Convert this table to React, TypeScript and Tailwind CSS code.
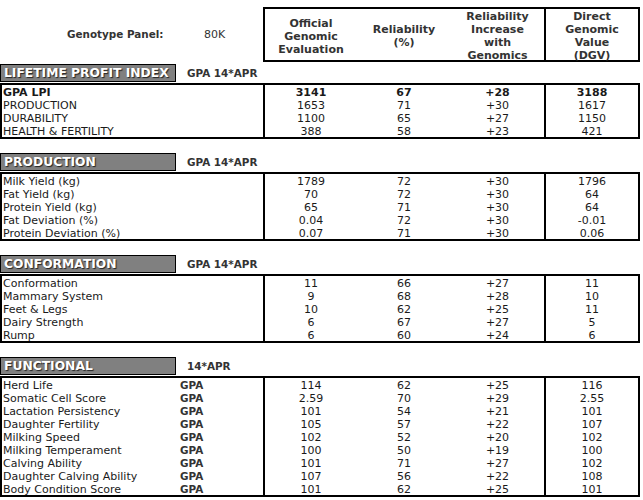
import React from 'react';

type Row = {
  label: string;
  gpa?: boolean;
  bold?: boolean;
  official: string;
  rel: string;
  inc: string;
  dgv: string;
};

type Section = {
  title: string;
  run: string;
  rows: Row[];
};

const sections: Section[] = [
  {
    title: 'LIFETIME PROFIT INDEX',
    run: 'GPA 14*APR',
    rows: [
      { label: 'GPA LPI', bold: true, official: '3141', rel: '67', inc: '+28', dgv: '3188' },
      { label: 'PRODUCTION', official: '1653', rel: '71', inc: '+30', dgv: '1617' },
      { label: 'DURABILITY', official: '1100', rel: '65', inc: '+27', dgv: '1150' },
      { label: 'HEALTH & FERTILITY', official: '388', rel: '58', inc: '+23', dgv: '421' },
    ],
  },
  {
    title: 'PRODUCTION',
    run: 'GPA 14*APR',
    rows: [
      { label: 'Milk Yield (kg)', official: '1789', rel: '72', inc: '+30', dgv: '1796' },
      { label: 'Fat Yield (kg)', official: '70', rel: '72', inc: '+30', dgv: '64' },
      { label: 'Protein Yield (kg)', official: '65', rel: '71', inc: '+30', dgv: '64' },
      { label: 'Fat Deviation (%)', official: '0.04', rel: '72', inc: '+30', dgv: '-0.01' },
      { label: 'Protein Deviation (%)', official: '0.07', rel: '71', inc: '+30', dgv: '0.06' },
    ],
  },
  {
    title: 'CONFORMATION',
    run: 'GPA 14*APR',
    rows: [
      { label: 'Conformation', official: '11', rel: '66', inc: '+27', dgv: '11' },
      { label: 'Mammary System', official: '9', rel: '68', inc: '+28', dgv: '10' },
      { label: 'Feet & Legs', official: '10', rel: '62', inc: '+25', dgv: '11' },
      { label: 'Dairy Strength', official: '6', rel: '67', inc: '+27', dgv: '5' },
      { label: 'Rump', official: '6', rel: '60', inc: '+24', dgv: '6' },
    ],
  },
  {
    title: 'FUNCTIONAL',
    run: '14*APR',
    rows: [
      { label: 'Herd Life', gpa: true, official: '114', rel: '62', inc: '+25', dgv: '116' },
      { label: 'Somatic Cell Score', gpa: true, official: '2.59', rel: '70', inc: '+29', dgv: '2.55' },
      { label: 'Lactation Persistency', gpa: true, official: '101', rel: '54', inc: '+21', dgv: '101' },
      { label: 'Daughter Fertility', gpa: true, official: '105', rel: '57', inc: '+22', dgv: '107' },
      { label: 'Milking Speed', gpa: true, official: '102', rel: '52', inc: '+20', dgv: '102' },
      { label: 'Milking Temperament', gpa: true, official: '100', rel: '50', inc: '+19', dgv: '100' },
      { label: 'Calving Ability', gpa: true, official: '101', rel: '71', inc: '+27', dgv: '102' },
      { label: 'Daughter Calving Ability', gpa: true, official: '107', rel: '56', inc: '+22', dgv: '108' },
      { label: 'Body Condition Score', gpa: true, official: '101', rel: '62', inc: '+25', dgv: '101' },
    ],
  },
];

const TraitRow: React.FC<{ row: Row }> = ({ row }) => (
  <div
    className={`grid grid-cols-[261px_94px_94px_93px_94px] h-[13px] leading-[15px] ${row.bold ? 'font-bold' : ''}`}
  >
    <div className="flex pl-[1px] whitespace-nowrap">
      <span className="w-[177px]">{row.label}</span>
      {row.gpa && <span className="font-bold text-[10.4px] text-[#333]">GPA</span>}
    </div>
    <div className="border-l-2 border-black text-center">{row.official}</div>
    <div className="text-center">{row.rel}</div>
    <div className="text-center">{row.inc}</div>
    <div className="border-l-2 border-black text-center">{row.dgv}</div>
  </div>
);

const SectionBlock: React.FC<{ section: Section }> = ({ section }) => (
  <div>
    <div className="flex items-center h-[18px]">
      <div className="w-[176px] h-full bg-[#808080] border border-black pl-[3px] text-white font-bold text-[12.3px] leading-[17px] whitespace-nowrap [text-shadow:1px_1px_1px_#222]">
        {section.title}
      </div>
      <span className="ml-[11px] pt-[1px] font-bold text-[10.4px] text-[#333]">{section.run}</span>
    </div>
    <div className="mt-[1px] w-[640px] border-2 border-black text-[#1a1a1a]">
      {section.rows.map((r) => (
        <TraitRow key={r.label} row={r} />
      ))}
    </div>
  </div>
);

export default function App() {
  return (
    <div className="w-[643px] h-[500px] bg-white overflow-hidden pt-[7px] text-[11px] [font-family:'DejaVu_Sans',Verdana,sans-serif]">
      <div className="flex h-[55px]">
        <div className="w-[263px] flex items-center pl-[67px] pt-[1px] text-[#333]">
          <span className="w-[137px] font-bold text-[10.4px]">Genotype Panel:</span>
          <span>80K</span>
        </div>
        <div className="w-[377px] h-full border-2 border-black grid grid-cols-[92px_94px_93px_94px] font-bold text-[#333] leading-[13px] text-center">
          <div className="flex items-center justify-center pt-[1px]">
            Official
            <br />
            Genomic
            <br />
            Evaluation
          </div>
          <div className="flex items-center justify-center pt-[1px]">
            Reliability
            <br />
            (%)
          </div>
          <div className="flex items-center justify-center pt-[1px]">
            Reliability
            <br />
            Increase
            <br />
            with
            <br />
            Genomics
          </div>
          <div className="border-l-2 border-black flex items-center justify-center pt-[1px]">
            Direct
            <br />
            Genomic
            <br />
            Value
            <br />
            (DGV)
          </div>
        </div>
      </div>

      <div className="mt-[2px] flex flex-col gap-[14px]">
        {sections.map((s) => (
          <SectionBlock key={s.title} section={s} />
        ))}
      </div>
    </div>
  );
}
